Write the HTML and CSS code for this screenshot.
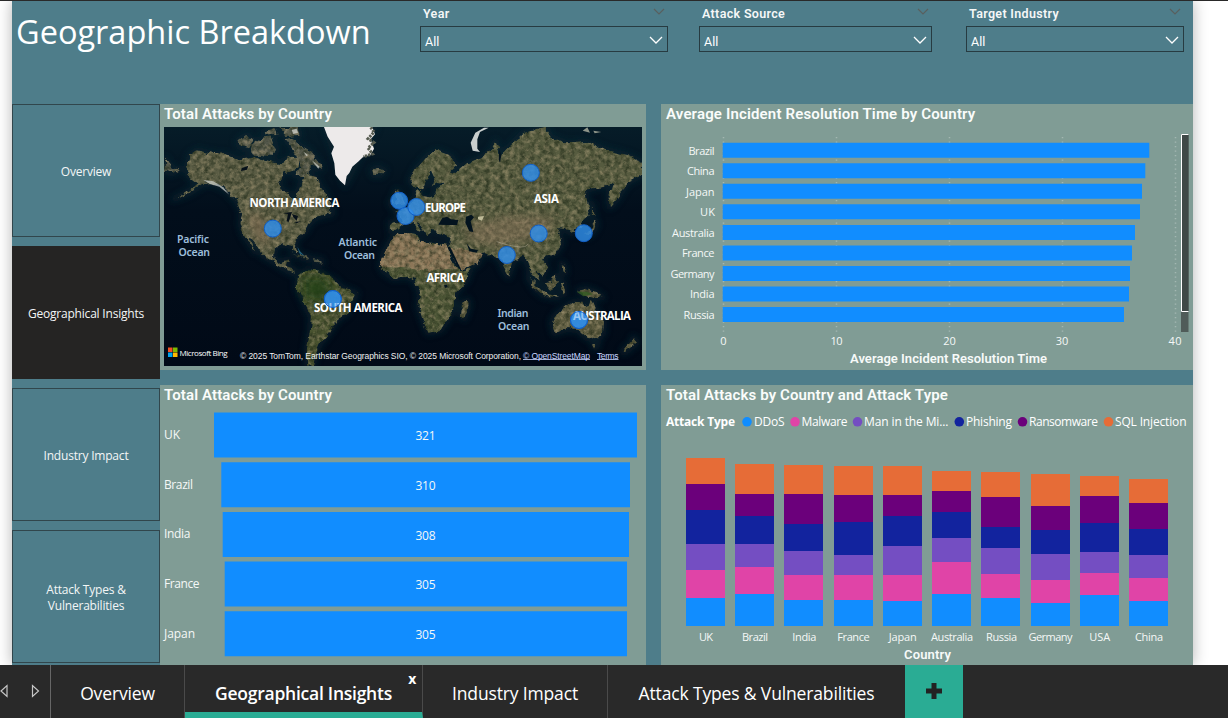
FILE: index.html
```html
<!DOCTYPE html>
<html lang="en">
<head>
<meta charset="utf-8">
<title>Geographic Breakdown</title>
<link rel="stylesheet" href="styles.css">
</head>
<body>
<main class="workspace">
  <div class="report">
    <header class="top">
      <h1 class="title">Geographic Breakdown</h1>
      <div class="slicer slicer-year">
        <div class="slicer-head"><span>Year</span><svg class="chev-dim" width="12" height="8" viewBox="0 0 12 8"><path d="M1 1l5 5 5-5"/></svg></div>
        <div class="select"><span class="all">All</span><svg class="chev" width="14" height="9" viewBox="0 0 14 9"><path d="M1 1l6 6 6-6"/></svg></div>
      </div>
      <div class="slicer slicer-source">
        <div class="slicer-head"><span>Attack Source</span><svg class="chev-dim" width="12" height="8" viewBox="0 0 12 8"><path d="M1 1l5 5 5-5"/></svg></div>
        <div class="select"><span class="all">All</span><svg class="chev" width="14" height="9" viewBox="0 0 14 9"><path d="M1 1l6 6 6-6"/></svg></div>
      </div>
      <div class="slicer slicer-target">
        <div class="slicer-head"><span>Target Industry</span><svg class="chev-dim" width="12" height="8" viewBox="0 0 12 8"><path d="M1 1l5 5 5-5"/></svg></div>
        <div class="select"><span class="all">All</span><svg class="chev" width="14" height="9" viewBox="0 0 14 9"><path d="M1 1l6 6 6-6"/></svg></div>
      </div>
    </header>
    <div class="body">
      <nav class="nav">
        <a class="nav-btn">Overview</a>
        <a class="nav-btn active">Geographical Insights</a>
        <a class="nav-btn">Industry Impact</a>
        <a class="nav-btn">Attack Types &amp;<br>Vulnerabilities</a>
      </nav>
      <div class="panels">
        <section class="panel">
          <h2 class="panel-title">Total Attacks by Country</h2>
          <svg class="map" width="478" height="239" viewBox="164 127 478 239">
            <defs>
              <filter id="terrain" x="-5%" y="-5%" width="110%" height="110%" color-interpolation-filters="sRGB">
                <feTurbulence type="fractalNoise" baseFrequency=".12" numOctaves="4" seed="7" result="n"/>
                <feDisplacementMap in="SourceGraphic" in2="n" scale="7" xChannelSelector="R" yChannelSelector="G" result="d"/>
                <feTurbulence type="fractalNoise" baseFrequency=".2" numOctaves="5" seed="21" result="m"/>
                <feColorMatrix in="m" values="0 0 0 0 .12  0 0 0 0 .16  0 0 0 0 .09  1.5 0 0 0 -.55" result="dark"/>
                <feColorMatrix in="m" values="0 0 0 0 .68  0 0 0 0 .62  0 0 0 0 .48  0 1.3 0 0 -.55" result="light"/>
                <feMerge result="tex"><feMergeNode in="d"/><feMergeNode in="dark"/><feMergeNode in="light"/></feMerge>
                <feComposite in="tex" in2="d" operator="in"/>
              </filter>
              <filter id="soft" x="-30%" y="-30%" width="160%" height="160%"><feGaussianBlur stdDeviation="9"/></filter>
              <filter id="patch" x="-40%" y="-40%" width="180%" height="180%"><feGaussianBlur stdDeviation="14"/></filter>
              <linearGradient id="sea" x1="0" y1="0" x2="0" y2="1"><stop offset="0" stop-color="#061c28"/><stop offset=".35" stop-color="#020e1b"/><stop offset="1" stop-color="#010a17"/></linearGradient>
              <path id="na" d="M78 205L90 165 112 150 150 160 200 164 240 180 282 172 325 182 358 188 392 170 420 170 415 205 395 212 372 218 357 245 365 270 390 282 405 300 415 270 428 235 440 215 452 230 470 238 483 262 500 285 512 312 510 335 490 348 465 355 445 375 436 395 415 412 403 428 412 460 403 458 393 438 365 433 345 445 342 470 355 488 384 478 378 500 402 508 405 522 385 514 340 486 310 468 288 432 268 408 287 456 270 432 250 402 241 370 246 340 228 302 195 268 160 250 130 252 90 278 40 298 90 270 112 252 85 228z"/>
              <path id="sa" d="M415 524L440 509 480 515 520 538 545 562 590 580 576 610 560 640 530 662 508 698 482 728 468 758 459 797 441 797 440 750 450 690 452 650 428 602 410 562z"/>
              <path id="af" d="M-58 500L-50 462-30 425-10 405 30 399 45 401 60 425 100 428 142 438 155 480 178 512 211 508 200 540 165 582 166 620 150 650 122 690 85 699 70 665 55 620 60 580 42 540 20 530-20 535-48 515z"/>
              <path id="eu" d="M-27 394L-29 367 5 366-2 345-15 335 20 320 40 300 48 270 60 266 62 290 90 295 110 270 130 252 112 248 98 260 104 236 92 210 82 235 70 262 45 260 30 242 50 205 85 165 112 152 155 170 170 198 150 214 165 220 200 190 240 175 275 150 287 123 300 165 340 128 370 98 440 83 452 110 500 130 560 125 620 150 680 165 726 185 726 225 680 250 650 300 630 322 625 290 640 250 600 260 555 270 560 300 572 345 540 376 515 402 498 385 472 382 486 430 468 458 440 467 427 482 442 502 428 527 408 516 418 550 396 525 385 500 372 465 342 482 325 530 310 508 300 480 270 460 245 462 235 490 185 510 165 478 145 440 152 410 112 402 100 388 82 404 65 375 50 365 72 394 52 388 35 366 12 378z"/>
              <path id="isles" d="M384 530l25 26 25 24 40 10-2 4-44-8-26-25zM438 550l18-6 14-18 7 16-12 20-18 10zM480 552l14-2-6 12 6 20-8 2zM535 572l22-6 30 10 22 16-14 2-24-6-20-5zM485 490l8 10 2 20-8-5zM455 670L462 650 490 625 520 605 548 608 553 625 566 620 572 600 585 625 612 664 610 700 590 721 560 714 532 690 500 688 463 700zM579 732l15 0-7 14zM700 712l12 14-14 13-26 20-5-5 25-22zM185 612l18-12 4 16-14 40-10-8zM-16 282l7-12 12 12 12 24-6 10-25 0 10-13zM-29 306l9-9 6 12-12 8zM555 402l18-20 12-20 6 10-10 20-20 18zM576 312l5 36-6-5z"/>
              <path id="arctic" d="M235 120L262 104 280 125 265 148 238 140zM270 140L300 118 335 112 352 150 330 172 282 166zM310 95L345 84 350 105 318 108zM360 84L412 84 420 105 380 108zM378 118L398 112 415 134 444 148 478 190 484 208 462 196 430 230 405 226 424 200 408 160zM636 210L655 202 674 212 662 226 640 225zM15 175L40 205 58 208 35 220 12 215zM400 463L430 466 456 478 430 475zM462 478l22 2 2 8-22-2zM500 328l20 8-12 10z"/>
            </defs>
            <rect x="164" y="127" width="478" height="239" fill="url(#sea)"/>
            <g transform="translate(160 100) scale(.33333)" stroke="#0b2a35" stroke-width="18" stroke-linejoin="round" fill="#0b2a35" filter="url(#soft)" opacity=".55"><use href="#na"/><use href="#sa"/><use href="#arctic"/><path d="M495 81H645L555 255z"/></g>
            <g transform="translate(400 100) scale(.33333)" stroke="#0b2a35" stroke-width="18" stroke-linejoin="round" fill="#0b2a35" filter="url(#soft)" opacity=".55"><use href="#eu"/><use href="#af"/><use href="#isles"/></g>
            <g filter="url(#terrain)">
              <g transform="translate(160 100) scale(.33333)">
                <use href="#na" fill="#5a5c44"/><use href="#sa" fill="#48522f"/><use href="#arctic" fill="#53574a"/>
              </g>
              <g transform="translate(400 100) scale(.33333)">
                <use href="#eu" fill="#565b3f"/><use href="#af" fill="#4d5636"/><use href="#isles" fill="#5c5a3f"/>
                <path d="M-58 500L-50 462-30 425-10 405 30 399 60 425 142 438 155 480 170 508 100 512 20 505z" fill="#8c7658"/>
                <path d="M145 440L200 450 245 462 235 490 185 510 165 478z" fill="#8c7658"/>
              </g>
            </g>
            <g transform="translate(160 100) scale(.33333)">
              <path d="M430 530l60 0 30 40-40 40-50-20z" fill="#213f19" opacity=".85" filter="url(#patch)"/>
              <path d="M260 340l50 10 20 90-40-20z" fill="#8b7358" opacity=".6" filter="url(#patch)"/>
              <path d="M370 340l26-4-10 30-6-2 4-22zM396 342l18 6-4 14-10-10zM404 366l20-2-14 6zM245 205l20-8-4 12-18 4z" fill="#061019"/>
              <path d="M492 81H636L645 103 632 118 642 146 632 164 610 170 596 184 577 200 568 219 560 228 555 256 540 242 526 224 523 190 514 160 522 140 503 110z" fill="#edeaea"/>
              <path d="M632 82l10 14-18 20 18 12-18 16 14 18-28 8" fill="none" stroke="#565b50" stroke-width="9" stroke-dasharray="7 3"/>
              <path d="M130 240l30 4 30 18 18 22-30-24-28-8zM395 90l15-4 4 12-14 4zM430 155l14 10-4 4zM455 180l24 20-4 6z" fill="#d5d8d3" opacity=".7"/>
              <path d="M412 440l8 14 14 14-16-8z" fill="#3180a0" opacity=".7"/>
            </g>
            <g transform="translate(400 100) scale(.33333)">
              <path d="M200 375L340 345 450 350 470 375 390 420 290 440 200 420z" fill="#a08068" opacity=".36" filter="url(#patch)"/>
              <path d="M115 374l12-20 14-4 12 8 22 2-4 15-26 0zM198 350l16-6 8 8-10 12 8 32-12-2-12-26zM142 440l8 0 30 62 4 6-8-4zM200 430l12 16 22 4-4 8-22-4zM132 556l9-2 2 8-8 2zM298 148l6 18-4 22-4-10z" fill="#03131e"/>
              <path d="M530 575l30 0 20 8-30 6z" fill="#355b23" opacity=".8"/>
              <path d="M218 152L212 128 226 98 252 83 266 83 240 96 232 118 232 146 240 156z" fill="#c9cecd"/>
              <path d="M548 92l14-10 8 16zM580 92l24 4-20 4z" fill="#8f958a"/>
              <path d="M234 350l18-2-6 14-12-4z" fill="#d8d2ae" opacity=".8"/>
              <path d="M290 425q60 20 85 15l10-8" stroke="#c6bea8" stroke-width="3" fill="none" opacity=".4"/>
            </g>
            <g class="dots">
              <circle cx="272.8" cy="228.6" r="8.5"/><circle cx="332.8" cy="299" r="8.5"/><circle cx="399.2" cy="200.7" r="8.5"/><circle cx="405.5" cy="216" r="8.5"/><circle cx="416.3" cy="207" r="8.5"/><circle cx="530.8" cy="172.8" r="8.5"/><circle cx="538.7" cy="233.5" r="8.5"/><circle cx="583.8" cy="233.2" r="8.5"/><circle cx="506.8" cy="255" r="8.5"/><circle cx="579" cy="320" r="8.5"/>
            </g>
            <g class="continent">
              <text x="249.5" y="207" textLength="90">NORTH AMERICA</text><text x="314" y="312" textLength="88.5">SOUTH AMERICA</text><text x="425" y="212" textLength="41">EUROPE</text><text x="534" y="203" textLength="25">ASIA</text><text x="426.500" y="282" textLength="38">AFRICA</text><text x="573" y="320" textLength="58">AUSTRALIA</text>
            </g>
            <g class="ocean">
              <text x="177" y="243" textLength="32">Pacific</text><text x="178.500" y="256" textLength="31.500">Ocean</text><text x="338.500" y="246" textLength="38.500">Atlantic</text><text x="344" y="258.500" textLength="31">Ocean</text><text x="497.500" y="317" textLength="31">Indian</text><text x="498" y="330" textLength="31.500">Ocean</text>
            </g>
            <circle class="over" cx="332.8" cy="299" r="8.5"/><circle class="over" cx="579" cy="320" r="8.5"/>
            <path d="M168 347.500h4.500v4.500h-4.500z" fill="#f25022"/><path d="M173 347.500h4.500v4.500h-4.500z" fill="#7fba00"/><path d="M168 352.500h4.500v4.500h-4.500z" fill="#00a4ef"/><path d="M173 352.500h4.500v4.500h-4.500z" fill="#ffb900"/>
            <text class="bing" x="179.500" y="355.500" textLength="48">Microsoft Bing</text>
            <g class="credits"><text x="240" y="358.500" textLength="281">© 2025 TomTom, Earthstar Geographics SIO, © 2025 Microsoft Corporation,</text><text class="lnk" x="523" y="358.500" textLength="67">© OpenStreetMap</text><text class="lnk" x="597" y="358.500" textLength="21.500">Terms</text><path d="M523 359.500h67M597 359.500h21.500"/></g>
          </svg>
        </section>
        <section class="panel">
          <h2 class="panel-title wide-a">Average Incident Resolution Time by Country</h2>
          <svg class="chart" width="532" height="243" viewBox="661 127 532 243">
            <path class="gridline" d="M723.500 137V332M836.500 137V332M949.500 137V332M1062.500 137V332M1175.500 137V332"/>
            <path class="bar" d="M722.700 142.700H1149.300v15H722.700zM722.700 163.200H1145.300v15H722.700zM722.700 183.800H1142v15H722.700zM722.700 204.300H1140v15H722.700zM722.700 224.900H1135v15H722.700zM722.700 245.400H1132v15H722.700zM722.700 266H1130v15H722.700zM722.700 286.500H1129v15H722.700zM722.700 307H1124v15H722.700z"/>
            <g class="label end"><text x="714.500" y="155" textLength="26">Brazil</text><text x="714.500" y="175" textLength="27.500">China</text><text x="714.500" y="196" textLength="28.500">Japan</text><text x="715" y="216" textLength="15">UK</text><text x="714.500" y="237" textLength="42.500">Australia</text><text x="714.500" y="257" textLength="32.500">France</text><text x="714.500" y="278" textLength="44">Germany</text><text x="714.500" y="298" textLength="24.500">India</text><text x="714.500" y="319" textLength="31">Russia</text></g>
            <g class="label mid"><text x="723.500" y="345">0</text><text x="836.500" y="345" textLength="12">10</text><text x="949.500" y="345" textLength="12.500">20</text><text x="1062" y="345" textLength="12.500">30</text><text x="1175" y="345" textLength="13">40</text></g>
            <text class="axis" x="948.500" y="363" textLength="197">Average Incident Resolution Time</text>
            <path d="M1181 134h7.500v198h-7.500z" fill="#505c59"/>
            <path d="M1181.500 134.500h7v177h-7z" fill="#3f4947"/><path d="M1188.500 134.500h-7v177h7" fill="none" stroke="#fff"/>
          </svg>
        </section>
        <section class="panel">
          <h2 class="panel-title">Total Attacks by Country</h2>
          <svg class="chart" width="486" height="257" viewBox="160 408 486 257">
            <path class="bar" d="M214 412.500H637v45H214zM221.300 462.200H630v45H221.300zM222.700 512H629v45H222.700zM224.700 561.500H627v45H224.700zM224.700 611.300H627v45H224.700z"/>
            <g class="label big"><text x="164" y="439" textLength="16">UK</text><text x="164" y="489" textLength="29">Brazil</text><text x="164" y="538" textLength="26.500">India</text><text x="164" y="588" textLength="35.500">France</text><text x="164" y="638" textLength="31">Japan</text></g>
            <g class="label big mid"><text x="425.500" y="440" textLength="20">321</text><text x="425.500" y="490" textLength="20">310</text><text x="425.500" y="540" textLength="20">308</text><text x="425.500" y="589" textLength="20">305</text><text x="425.500" y="639" textLength="20">305</text></g>
          </svg>
        </section>
        <section class="panel">
          <h2 class="panel-title wide-b">Total Attacks by Country and Attack Type</h2>
          <svg class="chart" width="532" height="257" viewBox="661 408 532 257">
            <text class="legend-title" x="666" y="426" textLength="69">Attack Type</text>
            <circle cx="747" cy="421.800" r="4.800" fill="#118dff"/><circle cx="795" cy="421.800" r="4.800" fill="#e044a7"/><circle cx="857.500" cy="421.800" r="4.800" fill="#744ec2"/><circle cx="959.300" cy="421.800" r="4.800" fill="#12239e"/><circle cx="1022.500" cy="421.800" r="4.800" fill="#6b007b"/><circle cx="1108.500" cy="421.800" r="4.800" fill="#e66c37"/>
            <g class="legend"><text x="754" y="426" textLength="30.500">DDoS</text><text x="801.500" y="426" textLength="46">Malware</text><text x="864" y="426" textLength="84.500">Man in the Mi...</text><text x="966" y="426" textLength="46">Phishing</text><text x="1029" y="426" textLength="69">Ransomware</text><text x="1115" y="426" textLength="71.500">SQL Injection</text></g>
            <g class="stacks" transform="translate(655 380) scale(.33333)">
              <path fill="#e66c37" d="M93 738V234h117v504zM241 738V252h117v486zM388 738V255h117v483zM536 738V259h117v479zM684 738V259h117v479zM831 738V272h117v466zM979 738V275h117v463zM1127 738V281h117v457zM1275 738V288h117v450zM1422 738V296h117v442z"/>
              <path fill="#6b007b" d="M93 738V312h117v426zM241 738V342h117v396zM388 738V341h117v397zM536 738V346h117v392zM684 738V345h117v393zM831 738V333h117v405zM979 738V352h117v386zM1127 738V379h117v359zM1275 738V348h117v390zM1422 738V368h117v370z"/>
              <path fill="#12239e" d="M93 738V391h117v347zM241 738V408h117v330zM388 738V433h117v305zM536 738V425h117v313zM684 738V408h117v330zM831 738V396h117v342zM979 738V442h117v296zM1127 738V451h117v287zM1275 738V430h117v308zM1422 738V447h117v291z"/>
              <path fill="#744ec2" d="M93 738V491h117v247zM241 738V493h117v245zM388 738V514h117v224zM536 738V526h117v212zM684 738V498h117v240zM831 738V475h117v263zM979 738V505h117v233zM1127 738V523h117v215zM1275 738V515h117v223zM1422 738V524h117v214z"/>
              <path fill="#e044a7" d="M93 738V569h117v169zM241 738V562h117v176zM388 738V585h117v153zM536 738V585h117v153zM684 738V584h117v154zM831 738V547h117v191zM979 738V581h117v157zM1127 738V600h117v138zM1275 738V578h117v160zM1422 738V594h117v144z"/>
              <path fill="#118dff" d="M93 738V653h117v85zM241 738V642h117v96zM388 738V659h117v79zM536 738V659h117v79zM684 738V662h117v76zM831 738V642h117v96zM979 738V654h117v84zM1127 738V670h117v68zM1275 738V645h117v93zM1422 738V663h117v75z"/>
            </g>
            <g class="label mid"><text x="706" y="641" textLength="14">UK</text><text x="755" y="641" textLength="26">Brazil</text><text x="804.300" y="641" textLength="24">India</text><text x="853.500" y="641" textLength="32.500">France</text><text x="902.700" y="641" textLength="28">Japan</text><text x="952" y="641" textLength="42">Australia</text><text x="1001.500" y="641" textLength="31">Russia</text><text x="1050.500" y="641" textLength="44">Germany</text><text x="1099.700" y="641" textLength="21">USA</text><text x="1149" y="641" textLength="28">China</text></g>
            <text class="axis" x="927.500" y="659" textLength="47">Country</text>
          </svg>
        </section>
      </div>
    </div>
  </div>
</main>
<footer class="tabs">
  <div class="arrows">
    <svg width="50" height="53" viewBox="0 0 50 53"><path d="M7 20.500v11L1 26zM32.500 20.500v11l6-5.500z"/></svg>
  </div>
  <a class="tab tab-overview">Overview</a>
  <a class="tab tab-geo current">Geographical Insights<span class="close">x</span></a>
  <a class="tab tab-industry">Industry Impact</a>
  <a class="tab tab-types">Attack Types &amp; Vulnerabilities</a>
  <a class="add"><svg width="16" height="16" viewBox="0 0 16 16"><path d="M5.500 0h5v5.500H16v5h-5.500V16h-5v-5.500H0v-5h5.500z"/></svg></a>
</footer>
</body>
</html>
```

FILE: styles.css
```css
* { box-sizing: border-box; }
body {
  margin: 0;
  width: 1228px;
  height: 718px;
  overflow: hidden;
  display: flex;
  flex-direction: column;
  background: #fff;
  font-family: "Open Sans", "Noto Sans", sans-serif;
}
.workspace {
  height: 665px;
  overflow: hidden;
  border-top: 1px solid #292929;
  padding-left: 12px;
}
.report {
  width: 1181px;
  height: 664px;
  background: #4e7d8a;
  box-shadow: 0 0 14px rgba(0, 0, 0, .3);
}
.top { display: flex; height: 103px; }
.title {
  margin: 0;
  padding-left: 4px;
  width: 408px;
  font-size: 32.500px;
  line-height: 61px;
  font-weight: 400;
  color: #fff;
  white-space: nowrap;
}
.slicer { padding-top: 3px; }
.slicer-year { width: 248px; margin-right: 31px; }
.slicer-source { width: 233px; margin-right: 34px; }
.slicer-target { width: 218px; }
.slicer-head {
  display: flex;
  justify-content: space-between;
  height: 22px;
  padding: 0 3px;
  font: 600 12.500px/20px Roboto, sans-serif;
  letter-spacing: .33px;
  color: #f5f7f7;
}
.chev-dim { margin-top: 4px; fill: none; stroke: #59605f; stroke-width: 1.200; }
.select {
  display: flex;
  justify-content: space-between;
  height: 26px;
  border: 1px solid #273b41;
  padding: 0 4px;
  font: 400 12.500px/30px Roboto, sans-serif;
  color: #fff;
}
.chev { margin-top: 9px; fill: none; stroke: #fff; stroke-width: 1.300; }
.body { display: flex; }
.nav {
  display: flex;
  flex-direction: column;
  gap: 9px;
  width: 148px;
}
.nav-btn {
  display: flex;
  align-items: center;
  justify-content: center;
  width: 148px;
  height: 133px;
  padding-top: 2px;
  border: 1px solid #31464c;
  font-size: 12px;
  font-weight: 500;
  line-height: 16px;
  letter-spacing: -.2px;
  text-align: center;
  color: #f3f6f6;
}
.active { background: #252423; border-color: #252423; }
.panels {
  display: grid;
  grid-template-columns: 486px 532px;
  grid-template-rows: 266px 280px;
  gap: 15px;
}
.panel { background: #809c95; overflow: hidden; }
.panel-title {
  margin: 0;
  padding-left: 4px;
  height: 23px;
  font: 600 15px/20px Roboto, sans-serif;
  letter-spacing: .12px;
  color: #fafcfb;
  white-space: nowrap;
}
.panel-title.wide-a, .panel-title.wide-b { padding-left: 5px; }
.panel-title.wide-a { letter-spacing: .16px; }
.map { display: block; margin-left: 4px; }
.chart { display: block; }
.bar { fill: #118dff; }
.stacks path { shape-rendering: crispEdges; }
.gridline { fill: none; stroke: #a3b7b2; stroke-width: 1.500; stroke-dasharray: 1.300 3.200; }
.label { font-size: 11px; font-weight: 500; fill: #f5f8f7; }
.big { font-size: 12px; }
.end { text-anchor: end; }
.mid { text-anchor: middle; }
.axis { font: 600 13px Roboto, sans-serif; text-anchor: middle; fill: #f7faf9; }
.legend { font-size: 12px; fill: #fff; }
.legend-title { font-size: 12px; font-weight: 700; fill: #fff; }
.dots circle, .over { fill: #2f8fec; fill-opacity: .82; stroke: #1260c8; stroke-width: 1; }
.over { fill-opacity: .5; }
.continent { font-size: 11.500px; font-weight: 700; fill: #fff; }
.ocean { font-family: "Noto Sans", sans-serif; font-size: 10.500px; font-weight: 600; fill: #9dbedb; }
.bing { font-size: 8px; fill: #fff; }
.credits { font: 8.500px "Liberation Sans", sans-serif; fill: #f0f0f0; }
.credits .lnk { fill: #c9d6ff; }
.credits path { stroke: #c9d6ff; fill: none; stroke-width: .8; }
.tabs {
  display: flex;
  height: 53px;
  background: #292929;
  color: #fff;
}
.arrows { width: 51px; border-right: 1px solid #666; overflow: hidden; }
.arrows path { fill: none; stroke: #c6c6c6; stroke-width: 1.200; }
.tab {
  position: relative;
  height: 53px;
  border-right: 1px solid #4a4a4a;
  font-size: 17.500px;
  line-height: 56px;
  letter-spacing: -.15px;
  text-align: center;
  white-space: nowrap;
}
.tab-overview { width: 134px; }
.tab-geo { width: 238px; }
.tab-industry { width: 185px; }
.tab-types { width: 297px; border-right: 0; }
.current { font-weight: 600; letter-spacing: -.25px; border-bottom: 6px solid #2aac94; }
.close {
  position: absolute;
  top: 4px;
  right: 6px;
  font-size: 14px;
  line-height: 20px;
  font-weight: 700;
}
.add {
  display: flex;
  align-items: center;
  justify-content: center;
  width: 58px;
  height: 53px;
  padding-bottom: 2px;
  background: #2aac94;
}
.add svg { fill: #222; }
```
